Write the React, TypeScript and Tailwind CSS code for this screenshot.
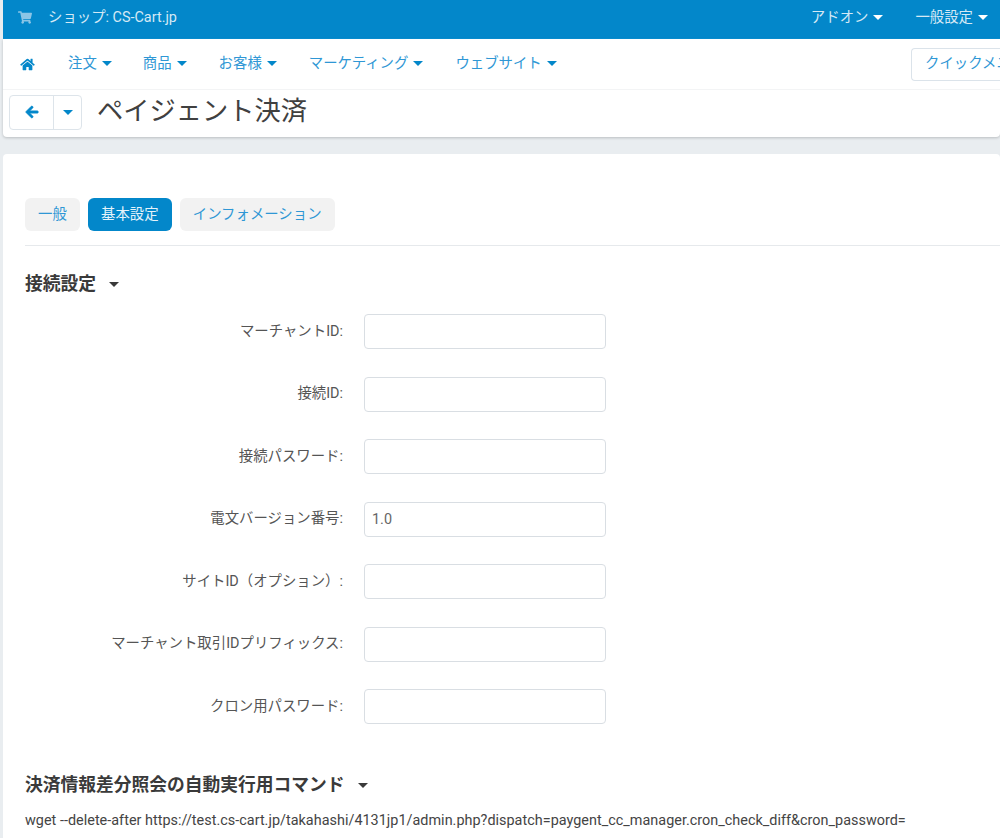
import { FaHome, FaShoppingCart, FaArrowLeft } from "react-icons/fa";

function Caret({ className }: { className: string }) {
  return (
    <span className={`inline-block w-0 h-0 border-x-[5px] border-x-transparent border-t-[5px] ${className}`} />
  );
}

const navItems = [
  { label: "注文", w: "mr-[31px]" },
  { label: "商品", w: "mr-[32px]" },
  { label: "お客様", w: "mr-[32px]" },
  { label: "マーケティング", w: "mr-[32px]" },
  { label: "ウェブサイト", w: "" },
];

const fields = [
  { label: "マーチャントID:", value: "" },
  { label: "接続ID:", value: "" },
  { label: "接続パスワード:", value: "" },
  { label: "電文バージョン番号:", value: "1.0" },
  { label: "サイトID（オプション）:", value: "" },
  { label: "マーチャント取引IDプリフィックス:", value: "" },
  { label: "クロン用パスワード:", value: "" },
];

export default function App() {
  return (
    <div className="h-[838px] w-[1000px] overflow-hidden bg-[#e9edf0] pl-[3px] font-['Roboto','Noto_Sans_CJK_JP',sans-serif] text-[14.4px]">
      <header className="h-[39px] bg-[#0387ca] border-b border-[#0a8fd3] flex items-center text-[#d5e9f5]">
        <FaShoppingCart className="ml-[15px] w-[14px] h-[13px] text-[#8cc5e6] -mt-[4px]" />
        <span className="ml-[16px] -mt-[2px]">ショップ: CS-Cart.jp</span>
        <div className="ml-auto flex items-center -mt-[2px]">
          <span>アドオン</span>
          <Caret className="ml-[5px] border-t-white" />
          <span className="ml-[32px]">一般設定</span>
          <Caret className="ml-[5px] mr-[12px] border-t-white" />
        </div>
      </header>
      <div className="bg-white rounded-b-[4px] shadow-[0_1px_3px_rgba(0,0,0,0.2)]">
        <nav className="h-[51px] border-b border-[#f3f4f5] flex items-center text-[#2f97d5]">
          <FaHome className="ml-[17px] mr-[33px] w-[15px] h-[13px] text-[#0387ca]" />
          {navItems.map((n) => (
            <span key={n.label} className={`flex items-center ${n.w}`}>
              {n.label}
              <Caret className="ml-[5px] border-t-[#0387ca]" />
            </span>
          ))}
          <div className="ml-auto w-[89px] h-[33px] shrink-0 overflow-hidden rounded-l-[4px] border border-r-0 border-[#dbe3ea] pl-[13px] flex items-center whitespace-nowrap">
            クイックメニュー
          </div>
        </nav>
        <div className="h-[47px] flex items-center pl-[6px]">
          <div className="flex h-[35px] w-[73px] rounded-[4px] border border-[#dde4ea] -mt-[3px]">
            <span className="w-[44px] border-r border-[#dde4ea] flex items-center justify-center">
              <FaArrowLeft className="w-[14px] h-[14px] text-[#0387ca] stroke-current stroke-[30px]" />
            </span>
            <span className="flex-1 flex items-center justify-center">
              <Caret className="border-t-[#0387ca]" />
            </span>
          </div>
          <h1 className="ml-[15px] -mt-[3px] text-[26.25px] font-normal text-[#404040]">ペイジェント決済</h1>
        </div>
      </div>
      <main className="mt-[17px] h-[700px] bg-white rounded-t-[4px] pl-[22px] pt-[44px] text-[#555]">
        <div className="flex gap-[8px] h-[48px] border-b border-[#e6e9ec] items-start">
          <span className="h-[33px] px-[13px] rounded-[6px] bg-[#f2f2f2] text-[#2f97d5] flex items-center">一般</span>
          <span className="h-[33px] px-[13.2px] rounded-[6px] bg-[#0387ca] text-[#e5f3fa] flex items-center">基本設定</span>
          <span className="h-[33px] px-[13px] rounded-[6px] bg-[#f2f2f2] text-[#2f97d5] flex items-center">インフォメーション</span>
        </div>
        <h2 className="mt-[27px] h-[22px] flex items-center text-[17.75px] font-bold text-[#3a3a3a]">
          接続設定
          <Caret className="ml-[13px] border-t-[#3a3a3a]" />
        </h2>
        <div className="mt-[19px] flex flex-col gap-[27.5px]">
          {fields.map((f) => (
            <div key={f.label} className="flex items-center h-[35px]">
              <label className="w-[318px] text-right text-[#555] whitespace-nowrap">{f.label}</label>
              <input
                readOnly
                value={f.value}
                className="ml-[21px] w-[242px] h-[35px] rounded-[4px] border border-[#d9dee3] px-[7px] text-[#666] outline-none"
              />
            </div>
          ))}
        </div>
        <h2 className="mt-[50px] h-[22px] flex items-center text-[17.75px] font-bold text-[#3a3a3a]">
          決済情報差分照会の自動実行用コマンド
          <Caret className="ml-[13px] border-t-[#3a3a3a]" />
        </h2>
        <p className="mt-[14px] text-[#444] whitespace-nowrap tracking-[0.023px]">
          wget --delete-after https://test.cs-cart.jp/takahashi/4131jp1/admin.php?dispatch=paygent_cc_manager.cron_check_diff&amp;cron_password=
        </p>
      </main>
    </div>
  );
}
